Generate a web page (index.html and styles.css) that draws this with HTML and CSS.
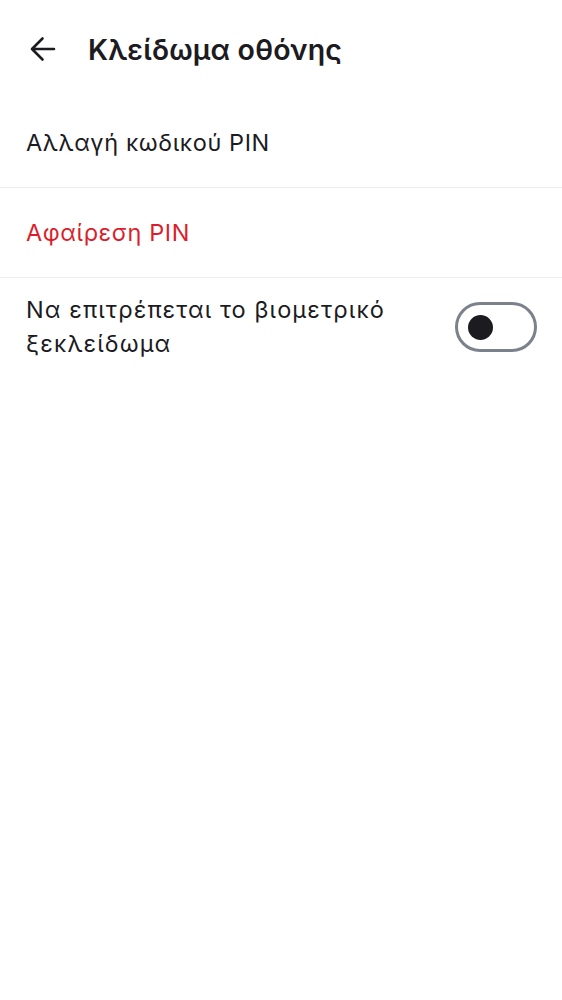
FILE: index.html
```html
<!DOCTYPE html>
<html lang="el">
<head>
<meta charset="utf-8">
<link rel="stylesheet" href="styles.css">
</head>
<body>
<header class="topbar">
  <span class="back">
    <svg width="26" height="26" viewBox="0 0 26 26" fill="none" stroke="#1c1b1f" stroke-width="2.6" stroke-linecap="round" stroke-linejoin="round">
      <path d="M24 13H2.5M12.5 2.5L2 13l10.5 10.5"/>
    </svg>
  </span>
  <h1 class="title">Κλείδωμα οθόνης</h1>
</header>
<main class="list">
  <div class="row">Αλλαγή κωδικού PIN</div>
  <div class="row danger">Αφαίρεση PIN</div>
  <div class="row toggle-row">
    <span class="label">Να επιτρέπεται το βιομετρικό ξεκλείδωμα</span>
    <span class="switch"><span class="knob"></span></span>
  </div>
</main>
</body>
</html>
```
FILE: styles.css
```css
html, body {
  margin: 0;
  padding: 0;
  background: #ffffff;
}
body {
  font-family: Inter, "Noto Sans", sans-serif;
  color: #1c1b1f;
}
.topbar {
  display: flex;
  align-items: center;
  height: 98px;
  padding-left: 30px;
  gap: 32px;
}
.back {
  display: flex;
  width: 26px;
  height: 26px;
}
.title {
  margin: 0;
  font-size: 28.5px;
  font-weight: 600;
  letter-spacing: 0.2px;
}
.list {
  display: flex;
  flex-direction: column;
}
.row {
  display: flex;
  align-items: center;
  height: 89px;
  padding: 0 26px;
  font-size: 23.5px;
  letter-spacing: 0.6px;
  border-bottom: 1px solid #ececf0;
}
.row.danger {
  color: #dc1e2c;
}
.toggle-row {
  border-bottom: none;
  height: auto;
  padding-top: 15px;
  justify-content: space-between;
  align-items: center;
}
.label {
  line-height: 34px;
  max-width: 400px;
  letter-spacing: 1.1px;
}
.switch {
  display: flex;
  align-items: center;
  box-sizing: border-box;
  width: 82px;
  height: 50px;
  border: 3px solid #7b828b;
  border-radius: 25px;
  padding-left: 10px;
  margin-right: -1px;
}
.knob {
  width: 25px;
  height: 25px;
  border-radius: 50%;
  background: #1c1b1f;
}
```
